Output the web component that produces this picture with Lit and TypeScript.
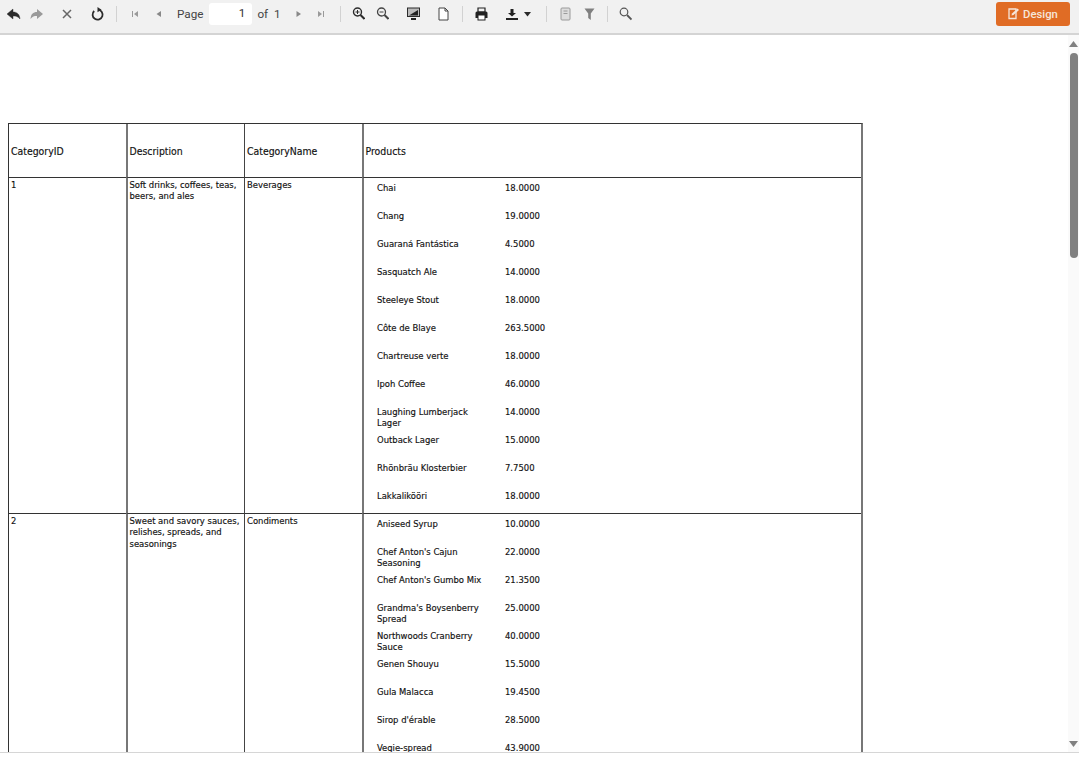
import { LitElement, html, css, svg } from "lit";
import { customElement } from "lit/decorators.js";

type P = [string, string];
const rows: { id: string; desc: string; name: string; products: P[] }[] = [
  {
    id: "1",
    desc: "Soft drinks, coffees, teas, beers, and ales",
    name: "Beverages",
    products: [
      ["Chai", "18.0000"], ["Chang", "19.0000"], ["Guaraná Fantástica", "4.5000"],
      ["Sasquatch Ale", "14.0000"], ["Steeleye Stout", "18.0000"], ["Côte de Blaye", "263.5000"],
      ["Chartreuse verte", "18.0000"], ["Ipoh Coffee", "46.0000"], ["Laughing Lumberjack Lager", "14.0000"],
      ["Outback Lager", "15.0000"], ["Rhönbräu Klosterbier", "7.7500"], ["Lakkalikööri", "18.0000"],
    ],
  },
  {
    id: "2",
    desc: "Sweet and savory sauces, relishes, spreads, and seasonings",
    name: "Condiments",
    products: [
      ["Aniseed Syrup", "10.0000"], ["Chef Anton's Cajun Seasoning", "22.0000"], ["Chef Anton's Gumbo Mix", "21.3500"],
      ["Grandma's Boysenberry Spread", "25.0000"], ["Northwoods Cranberry Sauce", "40.0000"], ["Genen Shouyu", "15.5000"],
      ["Gula Malacca", "19.4500"], ["Sirop d'érable", "28.5000"], ["Vegie-spread", "43.9000"],
    ],
  },
];

const ic = (w: number, body: unknown, cls = "") =>
  html`<svg class="ic ${cls}" width=${w} height="16" viewBox="0 0 ${w} 16">${body}</svg>`;

@customElement("app-root")
export class AppRoot extends LitElement {
  static styles = css`
    :host { display: block; width: 1079px; height: 760px; overflow: hidden; background: #fff; font-family: "DejaVu Sans Condensed", "Noto Sans", sans-serif; color: #111; }
    .toolbar { box-sizing: border-box; background: #f1f1f1; border-bottom: 2px solid #d4d4d4; height: 35px; display: flex; align-items: center; padding: 0 9px 5px 6px; font-family: Roboto, sans-serif; font-size: 11.7px; color: #444; }
    .ic { display: block; flex: none; }
    .group { display: flex; align-items: center; }
    .sep { width: 1px; height: 16px; background: #d2d2d2; flex: none; margin: 0 10px; }
    .page-input { width: 43px; height: 22px; background: #fff; border-radius: 3px; box-sizing: border-box; text-align: right; padding: 3px 7px 0 0; margin: 0 5px 0 6px; color: #333; }
    .spacer { flex: 1; }
    .design { display: flex; align-items: center; gap: 3px; width: 74px; height: 24px; box-sizing: border-box; justify-content: center; background: #e06c25; color: #f6e6da; border-radius: 3px; font-weight: 500; font-size: 11.3px; }
    .body { height: 717px; display: flex; border-bottom: 1px solid #d6d6d6; overflow: hidden; }
    .report { flex: 1; padding: 88px 0 0 8px; overflow: hidden; font-size: 9.4px; line-height: 11.5px; -webkit-text-stroke: 0.15px #111; }
    .table { width: 855px; box-sizing: border-box; border: 1px solid #333; border-right: 2px solid #777; display: grid; grid-template-columns: 117px 118px 118px 1fr; }
    .cell { padding: 0.5px 2px 1px; box-sizing: border-box; }
    .cell:nth-child(4n + 2), .cell:nth-child(4n) { border-left: 2px solid #777; padding-left: 1.5px; }
    .cell:nth-child(4n + 3) { border-left: 1px solid #444; }
    .head { height: 53px; display: flex; align-items: center; font-size: 10.4px; padding-top: 3px; }
    .row { border-top: 1px solid #333; }
    .cell.products { padding: 1px 0 0 13px; }
    .prod { height: 28px; padding-top: 2.5px; box-sizing: border-box; display: grid; grid-template-columns: 128px 1fr; }
    .prod:nth-child(12) { height: 26px; }
    .prod .n { width: 112px; }
    .scroll { width: 11px; background: #fafafa; display: flex; flex-direction: column; align-items: center; position: relative; }
    .thumb { width: 8px; height: 205px; background: #808080; border-radius: 4px; margin-top: 18px; }
    .arrow { position: absolute; left: 1px; }
    .up { top: 6px; }
    .down { bottom: 5px; }
  `;

  render() {
    const ink = "#2b2b2b";
    const mid = "#666";
    const dim = "#9a9a9a";
    return html`
      <div class="toolbar">
        <div class="group">
          ${ic(15, svg`<path d="M1 8 L7 3 V6 C11 6 13.5 8 14 13 C12 10.5 10 10 7 10 V13 Z" fill="${ink}" stroke="${ink}" stroke-width=".4"/>`)}
          <span style="width:9px"></span>
          ${ic(14, svg`<path d="M13 8 L7 3 V6 C3 6 1 8 .5 13 C2.5 10.5 4 10 7 10 V13 Z" fill="${dim}"/>`)}
          <span style="width:17px"></span>
          ${ic(12, svg`<path d="M2 4 L10 12 M10 4 L2 12" stroke="${mid}" stroke-width="1.5"/>`)}
          <span style="width:18px"></span>
          ${ic(14, svg`<path d="M3.2 5 A5 5 0 1 0 7 3.7" fill="none" stroke="${ink}" stroke-width="1.8"/><path d="M6.5 1 L10.5 3.7 L6.5 6.3 Z" fill="${ink}"/>`)}
        </div>
        <div class="sep" style="margin:0 14px 0 11px"></div>
        <div class="group">
          ${ic(8, svg`<path d="M1 5 H2 V11 H1 Z M7 5 V11 L3 8 Z" fill="${dim}"/>`)}
          <span style="width:16px"></span>
          ${ic(7, svg`<path d="M6 5 V11 L1.5 8 Z" fill="#888"/>`)}
          <span style="width:15px"></span>
          <span>Page</span>
          <div class="page-input">1</div>
          <span>of&nbsp; 1</span>
          <span style="width:14px"></span>
          ${ic(7, svg`<path d="M1.5 5 V11 L6 8 Z" fill="#888"/>`)}
          <span style="width:15px"></span>
          ${ic(8, svg`<path d="M6 5 H7 V11 H6 Z M1 5 V11 L5 8 Z" fill="${dim}"/>`)}
        </div>
        <div class="sep" style="margin:0 11px 0 15px"></div>
        <div class="group">
          ${ic(13, svg`<circle cx="5.5" cy="6" r="4" fill="none" stroke="${ink}" stroke-width="1.4"/><path d="M3.5 6 H7.5 M5.5 4 V8" stroke="${ink}"/><path d="M8.5 9 L12.5 13" stroke="${ink}" stroke-width="2"/>`)}
          <span style="width:11px"></span>
          ${ic(13, svg`<circle cx="5.5" cy="6" r="4" fill="none" stroke="#444" stroke-width="1.3"/><path d="M3.5 6 H7.5" stroke="#444"/><path d="M8.5 9 L12.5 13" stroke="#444" stroke-width="2"/>`)}
          <span style="width:18px"></span>
          ${ic(13, svg`<rect x=".5" y="2" width="12" height="8.5" fill="#bbb" stroke="${ink}"/><path d="M2 9.5 L11 4 V9.5 Z" fill="#222"/><rect x="4" y="12" width="5" height="2" fill="#222"/>`)}
          <span style="width:18px"></span>
          ${ic(11, svg`<path d="M1 2 H7 L10 5 V14 H1 Z" fill="#fff" stroke="#444"/><path d="M7 2 V5 H10" fill="none" stroke="#444"/>`)}
        </div>
        <div class="sep" style="margin:0 12px 0 13px"></div>
        <div class="group">
          ${ic(13, svg`<path d="M3 2 H10 V6 H3 Z" fill="none" stroke="#222" stroke-width="1.2"/><path d="M.5 7 Q.5 5.5 2 5.5 H11 Q12.5 5.5 12.5 7 V12 H.5 Z" fill="#222"/><rect x="3" y="9" width="7" height="5" fill="#fff" stroke="#222"/>`)}
          <span style="width:18px"></span>
          ${ic(12, svg`<path d="M4.5 3 H7.5 V7 H10 L6 10.5 L2 7 H4.5 Z" fill="#222"/><rect x="0" y="12" width="12" height="2" fill="#222"/>`)}
          <span style="width:6px"></span>
          ${ic(7, svg`<path d="M0 6 H7 L3.5 10.5 Z" fill="${ink}"/>`)}
        </div>
        <div class="sep" style="margin:0 13px 0 15px"></div>
        <div class="group">
          ${ic(11, svg`<rect x="1" y="2" width="9" height="12" rx="1" fill="#ddd" stroke="${dim}"/><path d="M3.5 5 H7.5 M3.5 7.5 H7.5" stroke="${dim}"/>`)}
          <span style="width:13px"></span>
          ${ic(11, svg`<path d="M.5 2.5 H10.5 L6.8 7.5 V14 L4.2 12 V7.5 Z" fill="#808080"/>`)}
        </div>
        <div class="sep" style="margin:0 11px 0 12px"></div>
        ${ic(13, svg`<circle cx="5" cy="6" r="3.8" fill="none" stroke="#555" stroke-width="1.2"/><path d="M8 9 L12.5 13.5" stroke="#555" stroke-width="1.8"/>`)}
        <div class="spacer"></div>
        <div class="design">
          ${ic(12, svg`<path d="M1 3 H8 V12.5 H1 Z" fill="none" stroke="#f6e6da" stroke-width="1.3"/><path d="M3.5 9.5 L4 7.5 L9.5 2.5 L11 4 L5.5 9 Z" fill="#f6e6da"/>`)}
          <span>Design</span>
        </div>
      </div>
      <div class="body">
        <div class="report">
          <div class="table">
            <div class="cell head">CategoryID</div>
            <div class="cell head">Description</div>
            <div class="cell head">CategoryName</div>
            <div class="cell head">Products</div>
            ${rows.map(
              (r) => html`
                <div class="cell row">${r.id}</div>
                <div class="cell row">${r.desc}</div>
                <div class="cell row">${r.name}</div>
                <div class="cell row products">
                  ${r.products.map(
                    ([n, p]) => html`<div class="prod"><div class="n">${n}</div><div>${p}</div></div>`
                  )}
                </div>
              `
            )}
          </div>
        </div>
        <div class="scroll">
          <svg class="arrow up" width="9" height="6" viewBox="0 0 9 6"><path d="M0 6 H9 L4.5 0 Z" fill="#808080"/></svg>
          <div class="thumb"></div>
          <svg class="arrow down" width="9" height="6" viewBox="0 0 9 6"><path d="M0 0 H9 L4.5 6 Z" fill="#808080"/></svg>
        </div>
      </div>
    `;
  }
}
